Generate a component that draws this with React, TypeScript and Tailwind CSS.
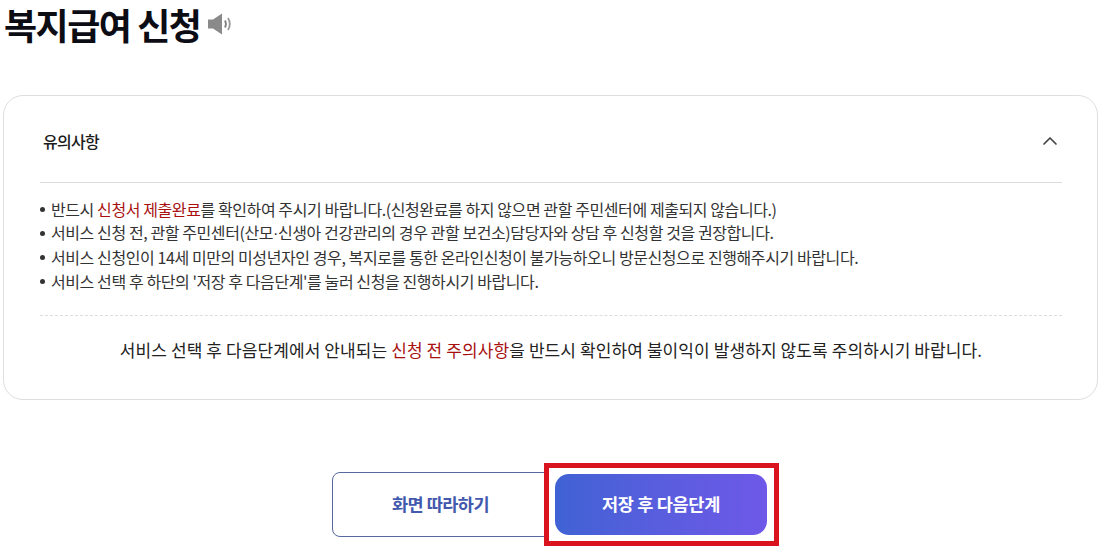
import React from 'react';
import { ChevronUp } from 'lucide-react';

const notices = [
  <>반드시 <em className="not-italic text-[#a81010]">신청서 제출완료</em>를 확인하여 주시기 바랍니다.(신청완료를 하지 않으면 관할 주민센터에 제출되지 않습니다.)</>,
  <>서비스 신청 전, 관할 주민센터(산모<span className="font-['Liberation_Sans']">·</span>신생아 건강관리의 경우 관할 보건소)담당자와 상담 후 신청할 것을 권장합니다.</>,
  <>서비스 신청인이 14세 미만의 미성년자인 경우, 복지로를 통한 온라인신청이 불가능하오니 방문신청으로 진행해주시기 바랍니다.</>,
  <>서비스 선택 후 하단의 '저장 후 다음단계'를 눌러 신청을 진행하시기 바랍니다.</>,
];

function SpeakerIcon() {
  return (
    <svg width="24" height="22" viewBox="0 0 24 22" fill="none">
      <path d="M0 6.5h5L14 0.5v21l-9-6H0z" fill="#8a8a8a" />
      <path d="M17 7.5c1.2 2.2 1.2 4.8 0 7" stroke="#808080" strokeWidth="1.8" />
      <path d="M20 5c2.2 3.6 2.2 8.400 0 12" stroke="#989898" strokeWidth="1.8" />
    </svg>
  );
}

export default function App() {
  return (
    <div className="h-[551px] w-[1102px] overflow-hidden bg-white font-['Noto_Sans_CJK_KR','Noto_Sans',sans-serif] text-[#111]">
      <div className="flex h-[48px] items-center gap-[8px] pl-[4px]">
        <h1 className="text-[36px] font-bold leading-[48px] tracking-[-1.5px] text-[#0c0c14]">복지급여 신청</h1>
        <SpeakerIcon />
      </div>

      <div className="mx-[3px] mt-[47px] h-[305px] w-[1095px] rounded-[20px] border border-[#dedede] pl-[36px] pr-[35px]">
        <div className="flex h-[87px] items-center justify-between border-b border-[#dcdcdc] pl-[3px] pr-[0px] pt-[4px]">
          <span className="text-[16px] font-medium tracking-[-0.7px] text-[#1c1c1c]">유의사항</span>
          <ChevronUp className="h-[24px] w-[24px] text-[#444]" strokeWidth={1.7} />
        </div>
        <ul className="border-b border-dashed border-[#dddddd] pb-[22px] pt-[14px]">
          {notices.map((n, i) => (
            <li key={i} className="flex h-[24px] items-center whitespace-nowrap text-[16px] tracking-[-0.41px] text-[#333]">
              <span className="mr-[6px] h-[5px] w-[5px] rounded-full bg-[#333]" />
              <span>{n}</span>
            </li>
          ))}
        </ul>
        <p className="pt-[21px] text-center text-[17px] leading-[26px] tracking-[0.1px] text-[#222]">
          서비스 선택 후 다음단계에서 안내되는 <em className="not-italic text-[#a81010]">신청 전 주의사항</em>을 반드시 확인하여 불이익이 발생하지 않도록 주의하시기 바랍니다.
        </p>
      </div>

      <div className="mt-[63px] flex items-center pl-[332px]">
        <button className="h-[65px] w-[220px] rounded-[8px] border border-[#56689f] bg-white pr-[3px] text-[17.5px] font-semibold tracking-[-0.5px] text-[#4259ad]">
          화면 따라하기
        </button>
        <div className="-ml-[8px] h-[83px] w-[235px] border-[5px] border-[#d9141f] bg-white p-[6px]">
          <button className="h-[61px] w-[212px] rounded-[14px] bg-gradient-to-r from-[#3f62d4] to-[#6e58e8] text-[17.5px] font-semibold tracking-[-0.3px] text-white">
            저장 후 다음단계
          </button>
        </div>
      </div>
    </div>
  );
}
